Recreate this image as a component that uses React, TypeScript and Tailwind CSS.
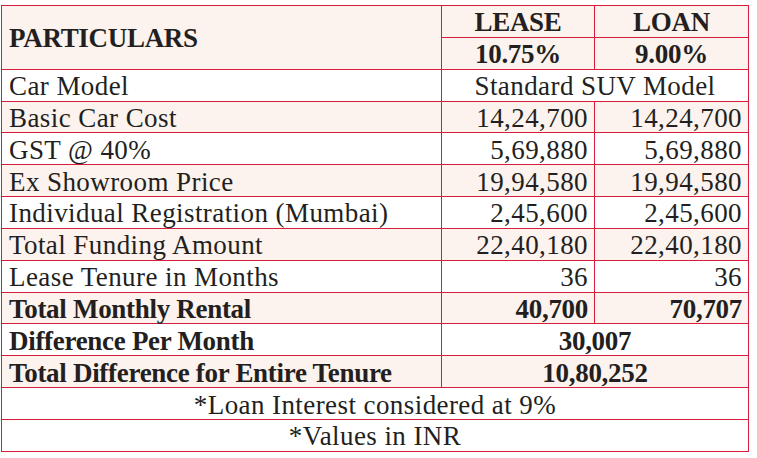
import React from "react";

const pink = "bg-[#fcf2ee]";

type Row = {
  label: string;
  a?: string;
  b?: string;
  merged?: string;
  bold?: boolean;
  bg?: boolean;
};

const rows: Row[] = [
  { label: "Car Model", merged: "Standard SUV Model" },
  { label: "Basic Car Cost", a: "14,24,700", b: "14,24,700", bg: true },
  { label: "GST @ 40%", a: "5,69,880", b: "5,69,880" },
  { label: "Ex Showroom Price", a: "19,94,580", b: "19,94,580", bg: true },
  { label: "Individual Registration (Mumbai)", a: "2,45,600", b: "2,45,600" },
  { label: "Total Funding Amount", a: "22,40,180", b: "22,40,180", bg: true },
  { label: "Lease Tenure in Months", a: "36", b: "36" },
  { label: "Total Monthly Rental", a: "40,700", b: "70,707", bold: true, bg: true },
  { label: "Difference Per Month", merged: "30,007", bold: true },
  { label: "Total Difference for Entire Tenure", merged: "10,80,252", bold: true, bg: true },
];

const cell = "border border-[#d91c3c] h-[31.85px] pt-[3px] pb-0 align-middle leading-none";
const reg = "font-normal tracking-[0.42px]";
const bld = "font-bold tracking-[-0.3px]";

export default function App() {
  return (
    <div
      className="w-[757px] h-[458px] bg-white pt-[5px] pl-[1px] text-[#231f20]"
      style={{ fontFamily: '"Liberation Serif", "Times New Roman", serif' }}
    >
      <table className="border-collapse w-[747px] text-[27px] table-fixed">
        <colgroup>
          <col className="w-[440px]" />
          <col className="w-[153px]" />
          <col className="w-[154px]" />
        </colgroup>
        <tbody>
          <tr className={pink}>
            <td rowSpan={2} className={`${cell} ${bld} pl-[7px] text-left`}>
              PARTICULARS
            </td>
            <td className={`${cell} ${bld} text-center`}>LEASE</td>
            <td className={`${cell} ${bld} text-center`}>LOAN</td>
          </tr>
          <tr className={pink}>
            <td className={`${cell} ${bld} text-center`}>10.75%</td>
            <td className={`${cell} ${bld} text-center`}>9.00%</td>
          </tr>
          {rows.map((r) => (
            <tr key={r.label} className={r.bg ? pink : "bg-white"}>
              <td className={`${cell} ${r.bold ? bld : reg} pl-[7px] text-left whitespace-nowrap`}>
                {r.label}
              </td>
              {r.merged ? (
                <td colSpan={2} className={`${cell} ${r.bold ? bld : reg} text-center`}>
                  {r.merged}
                </td>
              ) : (
                <>
                  <td className={`${cell} ${r.bold ? bld : reg} text-right pr-[6px]`}>{r.a}</td>
                  <td className={`${cell} ${r.bold ? bld : reg} text-right pr-[6px]`}>{r.b}</td>
                </>
              )}
            </tr>
          ))}
          <tr className="bg-white">
            <td colSpan={3} className={`${cell} ${reg} text-center`}>
              *Loan Interest considered at 9%
            </td>
          </tr>
          <tr className="bg-white">
            <td colSpan={3} className={`${cell} ${reg} text-center`}>
              *Values in INR
            </td>
          </tr>
        </tbody>
      </table>
    </div>
  );
}
